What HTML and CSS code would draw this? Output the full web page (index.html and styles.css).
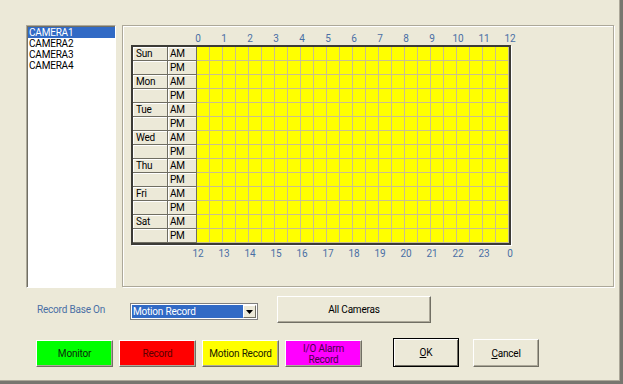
FILE: index.html
```html
<!DOCTYPE html>
<html>
<head>
<meta charset="utf-8">
<link rel="stylesheet" href="styles.css">
</head>
<body>
<div class="window">
  <div class="top">
    <div class="listbox">
      <div class="item sel">CAMERA1</div>
      <div class="item">CAMERA2</div>
      <div class="item">CAMERA3</div>
      <div class="item">CAMERA4</div>
    </div>
    <div class="panel">
      <div class="hours">
        <span>0</span><span>1</span><span>2</span><span>3</span><span>4</span><span>5</span><span>6</span><span>7</span><span>8</span><span>9</span><span>10</span><span>11</span><span>12</span>
      </div>
      <div class="sched">
        <div class="labels">
          <div class="cell day">Sun</div><div class="cell ap">AM</div>
          <div class="cell day"></div><div class="cell ap">PM</div>
          <div class="cell day">Mon</div><div class="cell ap">AM</div>
          <div class="cell day"></div><div class="cell ap">PM</div>
          <div class="cell day">Tue</div><div class="cell ap">AM</div>
          <div class="cell day"></div><div class="cell ap">PM</div>
          <div class="cell day">Wed</div><div class="cell ap">AM</div>
          <div class="cell day"></div><div class="cell ap">PM</div>
          <div class="cell day">Thu</div><div class="cell ap">AM</div>
          <div class="cell day"></div><div class="cell ap">PM</div>
          <div class="cell day">Fri</div><div class="cell ap">AM</div>
          <div class="cell day"></div><div class="cell ap">PM</div>
          <div class="cell day">Sat</div><div class="cell ap">AM</div>
          <div class="cell day"></div><div class="cell ap">PM</div>
        </div>
        <div class="grid"></div>
      </div>
      <div class="hours bottom">
        <span>12</span><span>13</span><span>14</span><span>15</span><span>16</span><span>17</span><span>18</span><span>19</span><span>20</span><span>21</span><span>22</span><span>23</span><span>0</span>
      </div>
    </div>
  </div>
  <div class="row1">
    <span class="rbo">Record Base On</span>
    <div class="combo">
      <span class="combo-text">Motion Record</span>
      <span class="combo-btn"><svg width="7" height="4" viewBox="0 0 7 4"><path d="M0 0h7L3.5 4z" fill="#000"/></svg></span>
    </div>
    <button class="btn allcam">All Cameras</button>
  </div>
  <div class="row2">
    <button class="btn color green">Monitor</button>
    <button class="btn color red">Record</button>
    <button class="btn color yellow">Motion Record</button>
    <button class="btn color magenta">I/O Alarm<br>Record</button>
    <button class="btn ok"><u>O</u>K</button>
    <button class="btn cancel"><u>C</u>ancel</button>
  </div>
</div>
</body>
</html>
```

FILE: styles.css
```css
* { box-sizing: border-box; }
html, body { margin: 0; padding: 0; }
body {
  width: 623px;
  height: 384px;
  overflow: hidden;
  background: #ece9d8;
  font-family: Roboto, "Liberation Sans", sans-serif;
  font-size: 10px;
  letter-spacing: -0.2px;
  color: #000;
}
.window {
  width: 623px;
  height: 384px;
  border-right: 3px solid #77766f;
  border-bottom: 3px solid #77766f;
  box-shadow: inset -1px -1px 0 #aca899;
  background: #ece9d8;
}
.top {
  display: flex;
  padding-top: 25px;
}
.listbox {
  margin-left: 26px;
  width: 90px;
  height: 263px;
  background: #fff;
  border-top: 1px solid #aca899;
  border-left: 1px solid #aca899;
  border-right: 1px solid #fff;
  border-bottom: 1px solid #fff;
  box-shadow: inset 1px 1px 0 #716f64;
  padding: 1px 0 0 1px;
}
.item {
  height: 11px;
  line-height: 11px;
  padding-left: 1px;
}
.item.sel {
  background: #316ac5;
  color: #fff;
}
.panel {
  margin-left: 6px;
  width: 492px;
  height: 262px;
  border: 1px solid #aca899;
  box-shadow: inset 1px 1px 0 #fff, 1px 1px 0 #fff;
  padding: 7px 0 0 8px;
}
.hours {
  display: flex;
  margin-left: 54px;
  height: 12px;
  line-height: 12px;
  color: #4a6fa5;
}
.hours span {
  width: 26px;
  text-align: center;
  flex: none;
}
.hours.bottom { margin-top: 3px; }
.sched {
  display: flex;
  width: 380px;
  border: 2px solid #3c3b36;
  box-shadow: 1px 1px 0 #fff;
}
.labels {
  display: grid;
  grid-template-columns: 35px 29px;
  grid-auto-rows: 14px;
  background: #ece9d8;
}
.cell {
  border-right: 1px solid #6f6d62;
  border-bottom: 1px solid #6f6d62;
  box-shadow: inset 1px 1px 0 #fff;
  line-height: 13px;
  padding-left: 3px;
}
.cell.ap { padding-left: 2px; }
.grid {
  width: 312px;
  height: 196px;
  background-color: #ffff00;
  background-image:
    repeating-linear-gradient(to right, transparent 0 12px, #c9bf8e 12px 13px),
    repeating-linear-gradient(to bottom, transparent 0 13px, #c9bf8e 13px 14px);
}
.row1 {
  display: flex;
  align-items: flex-start;
  margin-top: 8px;
  height: 27px;
}
.rbo {
  margin-left: 37px;
  width: 93px;
  margin-top: 8px;
  color: #4a6fa5;
  line-height: 12px;
}
.combo {
  display: flex;
  width: 128px;
  height: 17px;
  margin-top: 7px;
  border: 1px solid #7f7f7f;
  background: #fff;
  padding: 1px;
}
.combo-text {
  flex: 1;
  background: #316ac5;
  color: #fff;
  line-height: 13px;
  padding-left: 1px;
}
.combo-btn {
  width: 13px;
  display: flex;
  align-items: center;
  justify-content: center;
  background: #ece9d8;
  border-top: 1px solid #fff;
  border-left: 1px solid #fff;
  border-right: 1px solid #716f64;
  border-bottom: 1px solid #716f64;
}
.btn {
  font-family: Roboto, "Liberation Sans", sans-serif;
  font-size: 10px;
  letter-spacing: -0.2px;
  color: #000;
  background: #ece9d8;
  border-top: 1px solid #fff;
  border-left: 1px solid #fff;
  border-right: 1px solid #716f64;
  border-bottom: 1px solid #716f64;
  box-shadow: inset -1px -1px 0 #aca899;
  padding: 0;
  line-height: 11px;
  text-align: center;
}
.allcam {
  margin-left: 19px;
  width: 154px;
  height: 27px;
}
.row2 {
  display: flex;
  align-items: flex-end;
  margin-top: 15px;
  height: 29px;
}
.color {
  width: 77px;
  height: 27px;
  margin-left: 6px;
}
.green { background: #00ff00; margin-left: 36px; color: #0b2a0b; }
.red { background: #ff0000; color: #5a0000; }
.yellow { background: #ffff00; color: #202000; }
.magenta { background: #ff00ff; color: #4a004a; }
.ok {
  margin-left: 31px;
  width: 66px;
  height: 29px;
  border: 1px solid #000;
  box-shadow: inset 1px 1px 0 #fff, inset -1px -1px 0 #716f64;
}
.cancel {
  margin-left: 14px;
  width: 66px;
  height: 28px;
}
```
